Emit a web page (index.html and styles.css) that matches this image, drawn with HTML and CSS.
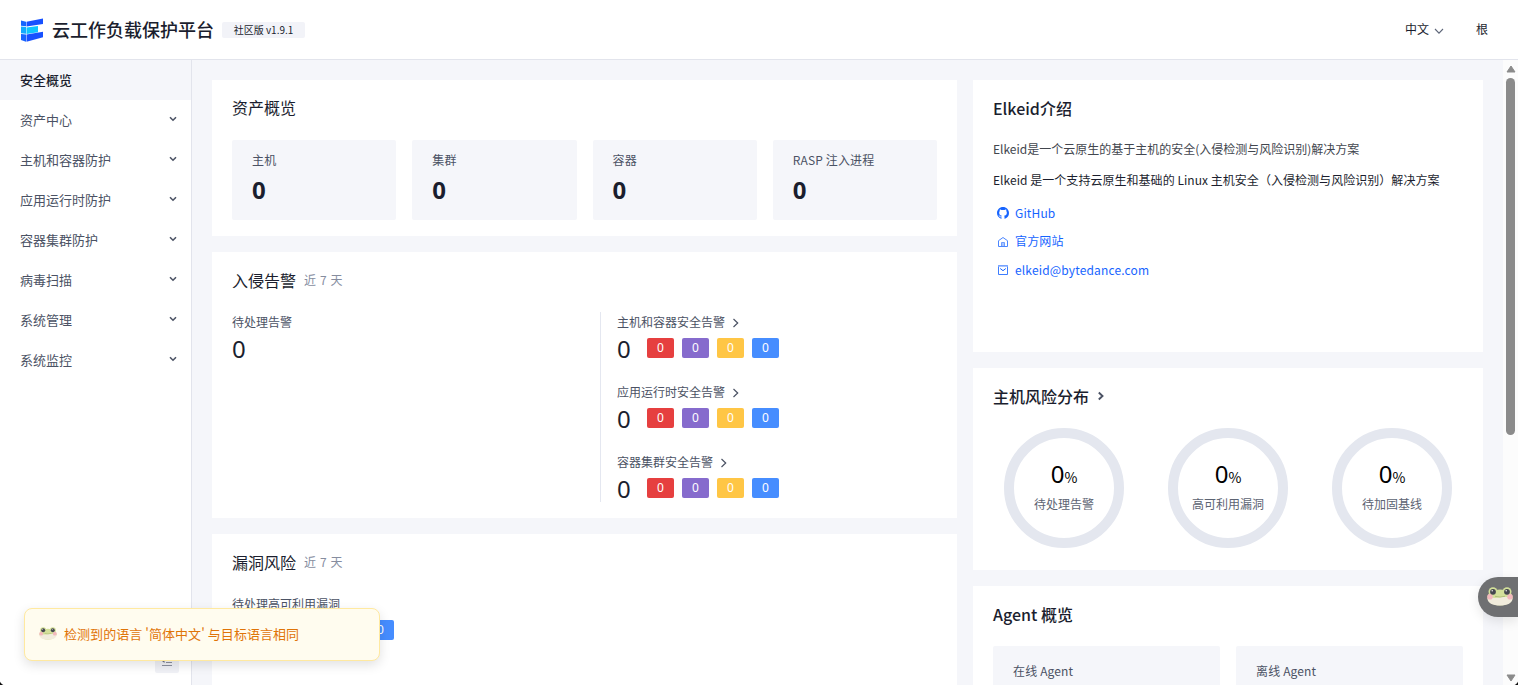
FILE: index.html
```html
<!DOCTYPE html>
<html lang="zh-CN">
<head>
  <meta charset="UTF-8">
  <meta name="viewport" content="width=device-width, initial-scale=1.0">
  <title>云工作负载保护平台</title>
  <link rel="stylesheet" href="styles.css">
</head>
<body>
  <svg class="defs" width="0" height="0">
    <symbol id="frog" viewBox="0 0 26 19">
      <circle cx="6" cy="4.800" r="4.500" fill="#d3e09a"/>
      <circle cx="20" cy="4.800" r="4.500" fill="#d3e09a"/>
      <ellipse cx="13" cy="10.500" rx="12.500" ry="8" fill="#d3e09a"/>
      <path d="M0.500 11 C5 10.500 8 11.500 13 10.500 S21 10.500 25.500 11 C26 16 20 18.600 13 18.600 S0 16 0.500 11Z" fill="#f1ecdc"/>
      <circle cx="3" cy="9.800" r="2.800" fill="#f3b8bd"/>
      <circle cx="23" cy="9.800" r="2.800" fill="#f3b8bd"/>
      <circle cx="6" cy="4.800" r="2.900" fill="#45474f"/>
      <circle cx="20" cy="4.800" r="2.900" fill="#45474f"/>
      <circle cx="5.200" cy="3.800" r="0.700" fill="#fff"/>
      <circle cx="19.200" cy="3.800" r="0.700" fill="#fff"/>
      <path d="M8 9.300 Q13 10.800 18 9.300" fill="none" stroke="#a3b36f" stroke-width="0.700"/>
    </symbol>
    <symbol id="down" viewBox="0 0 8 6"><path d="M1 1.200 L4 4.200 L7 1.200" fill="none" stroke="currentColor" stroke-width="1.600"/></symbol>
    <symbol id="right" viewBox="0 0 8 10"><path d="M1.500 1 L5.700 5 L1.500 9" fill="none" stroke="currentColor" stroke-width="1.200"/></symbol>
    <symbol id="right-bold" viewBox="0 0 8 10"><path d="M1.800 1.500 L5.500 5 L1.800 8.500" fill="none" stroke="currentColor" stroke-width="1.900"/></symbol>
  </svg>

  <header class="header">
    <svg class="logo" width="24" height="24" viewBox="0 0 24 24">
      <path d="M1 2.500 L6 3.700 V8.300 L1 7.700Z" fill="#1664ff"/>
      <path d="M6.500 3.700 L23 0.500 V6 L6.500 8.600Z" fill="#1751ff"/>
      <path d="M1 8.500 L6 9.100 V15.700 L1 15.300Z" fill="#12aaff"/>
      <path d="M6.500 9.400 L18 8 V14.300 L6.500 15.900Z" fill="#0fc5ff"/>
      <path d="M1 16.100 L6 16.600 V23.700 L1 22Z" fill="#1664ff"/>
      <path d="M6.500 16.600 L23 13.800 V19.300 L6.500 23.700Z" fill="#1751ff"/>
    </svg>
    <h1 class="brand">云工作负载保护平台</h1>
    <span class="version">社区版 v1.9.1</span>
    <div class="header-right">
      <span>中文</span>
      <svg class="lang-arrow" width="10" height="7" viewBox="0 0 10 7"><path d="M1 1 L5 5.200 L9 1" fill="none" stroke="#5d6578" stroke-width="1.100"/></svg>
      <span class="user">根</span>
    </div>
  </header>

  <div class="layout">
    <nav class="sidebar">
      <a class="nav-item active">安全概览</a>
      <a class="nav-item">资产中心<svg><use href="#down"/></svg></a>
      <a class="nav-item">主机和容器防护<svg><use href="#down"/></svg></a>
      <a class="nav-item">应用运行时防护<svg><use href="#down"/></svg></a>
      <a class="nav-item">容器集群防护<svg><use href="#down"/></svg></a>
      <a class="nav-item">病毒扫描<svg><use href="#down"/></svg></a>
      <a class="nav-item">系统管理<svg><use href="#down"/></svg></a>
      <a class="nav-item">系统监控<svg><use href="#down"/></svg></a>
      <div class="collapse">
        <svg width="12" height="12" viewBox="0 0 12 12"><path d="M1 1.500H11M5 4.500H11M5 7.500H11M1 10.500H11" stroke="#8c919f" stroke-width="1"/><path d="M3.500 4V8L1 6Z" fill="#6b7080"/></svg>
      </div>
    </nav>

    <main class="content">
      <div class="column-main">
        <section class="card assets">
          <h2 class="card-title thin">资产概览</h2>
          <div class="stats">
            <div class="stat"><span>主机</span><b>0</b></div>
            <div class="stat"><span>集群</span><b>0</b></div>
            <div class="stat"><span>容器</span><b>0</b></div>
            <div class="stat"><span>RASP 注入进程</span><b>0</b></div>
          </div>
        </section>

        <section class="card alarms">
          <h2 class="card-title thin">入侵告警<small>近 7 天</small></h2>
          <div class="alarm-body">
            <div class="alarm-total">
              <div class="label">待处理告警</div>
              <div class="number">0</div>
            </div>
            <div class="alarm-list">
              <div class="alarm">
                <div class="label">主机和容器安全告警<svg><use href="#right"/></svg></div>
                <div class="levels"><span class="number">0</span><i class="red">0</i><i class="purple">0</i><i class="yellow">0</i><i class="blue">0</i></div>
              </div>
              <div class="alarm">
                <div class="label">应用运行时安全告警<svg><use href="#right"/></svg></div>
                <div class="levels"><span class="number">0</span><i class="red">0</i><i class="purple">0</i><i class="yellow">0</i><i class="blue">0</i></div>
              </div>
              <div class="alarm">
                <div class="label">容器集群安全告警<svg><use href="#right"/></svg></div>
                <div class="levels"><span class="number">0</span><i class="red">0</i><i class="purple">0</i><i class="yellow">0</i><i class="blue">0</i></div>
              </div>
            </div>
          </div>
        </section>

        <section class="card vulns">
          <h2 class="card-title thin">漏洞风险<small>近 7 天</small></h2>
          <div class="alarm">
            <div class="label">待处理高可利用漏洞</div>
            <div class="levels"><span class="number">0</span><i class="red">0</i><i class="purple">0</i><i class="yellow">0</i><i class="blue">0</i></div>
          </div>
        </section>
      </div>

      <div class="column-side">
        <section class="card intro">
          <h2 class="card-title">Elkeid介绍</h2>
          <p class="desc">Elkeid是一个云原生的基于主机的安全(入侵检测与风险识别)解决方案</p>
          <p class="desc-full">Elkeid 是一个支持云原生和基础的 Linux 主机安全（入侵检测与风险识别）解决方案</p>
          <ul class="links">
            <li>
              <svg width="12" height="12" viewBox="0 0 16 16"><path fill="#1664ff" d="M8 0C3.580 0 0 3.580 0 8c0 3.540 2.290 6.530 5.470 7.590.4.070.55-.17.55-.38 0-.19-.01-.82-.01-1.490-2.010.37-2.530-.49-2.690-.94-.09-.23-.48-.94-.82-1.130-.28-.15-.68-.52-.01-.53.63-.01 1.080.58 1.230.82.72 1.210 1.870.87 2.330.66.070-.52.28-.87.51-1.070-1.780-.2-3.640-.89-3.640-3.950 0-.87.31-1.590.82-2.150-.08-.2-.36-1.020.08-2.120 0 0 .67-.21 2.200.82a7.600 7.600 0 0 1 4 0c1.530-1.040 2.200-.82 2.200-.82.44 1.100.16 1.920.08 2.120.51.56.82 1.270.82 2.150 0 3.070-1.870 3.750-3.650 3.950.29.25.54.73.54 1.480 0 1.070-.01 1.930-.01 2.200 0 .21.15.46.55.38A8 8 0 0 0 16 8c0-4.420-3.580-8-8-8Z"/></svg>
              <a>GitHub</a>
            </li>
            <li>
              <svg width="12" height="12" viewBox="0 0 12 12"><path d="M1.500 10.500V4.700L6 1.500L10.500 4.700V10.500Z" fill="none" stroke="#4b86ff"/><path d="M4.500 10V6.500H7.500V10" fill="#a9c5ff" stroke="#6f9fff"/></svg>
              <a>官方网站</a>
            </li>
            <li>
              <svg width="12" height="12" viewBox="0 0 12 12"><path d="M1.500 1.500H10.500V10.500H1.500Z" fill="none" stroke="#3d7dff"/><path d="M1 2H11" stroke="#8bb1ff" stroke-width="1.500"/><path d="M3.200 4.500L6 6.700L8.800 4.500" fill="none" stroke="#1664ff"/></svg>
              <a>elkeid@bytedance.com</a>
            </li>
          </ul>
        </section>

        <section class="card risks">
          <h2 class="card-title">主机风险分布<svg><use href="#right-bold"/></svg></h2>
          <div class="rings">
            <div class="ring"><div class="percent">0<span>%</span></div><div class="ring-label">待处理告警</div></div>
            <div class="ring"><div class="percent">0<span>%</span></div><div class="ring-label">高可利用漏洞</div></div>
            <div class="ring"><div class="percent">0<span>%</span></div><div class="ring-label">待加固基线</div></div>
          </div>
        </section>

        <section class="card agents">
          <h2 class="card-title">Agent 概览</h2>
          <div class="stats">
            <div class="stat">在线 Agent</div>
            <div class="stat">离线 Agent</div>
          </div>
        </section>
      </div>
    </main>

    <div class="scrollbar">
      <svg width="10" height="8" viewBox="0 0 10 8"><path d="M5 1L9 7H1Z" fill="#8b8b8b" stroke="#8b8b8b" stroke-linejoin="round"/></svg>
      <div class="thumb"></div>
      <svg class="arrow-down" width="10" height="8" viewBox="0 0 10 8"><path d="M5 7L9 1H1Z" fill="#8b8b8b" stroke="#8b8b8b" stroke-linejoin="round"/></svg>
    </div>
  </div>

  <div class="toast">
    <svg width="18" height="13"><use href="#frog"/></svg>
    <span>检测到的语言 '简体中文' 与目标语言相同</span>
  </div>
  <div class="frog-button"><svg width="28" height="19"><use href="#frog"/></svg></div>
  <div class="corner corner-left"></div>
  <div class="corner corner-right"></div>
</body>
</html>
```
FILE: styles.css
```css
* {
  box-sizing: border-box;
}
body {
  margin: 0;
  height: 685px;
  overflow: hidden;
  display: flex;
  flex-direction: column;
  font-family: "Noto Sans CJK SC", sans-serif;
  font-size: 12px;
  line-height: 20px;
  color: #1b1e2e;
  background: #fff;
}
h1, h2, p, ul {
  margin: 0;
  padding: 0;
}
svg {
  display: block;
  flex: none;
}
.defs {
  position: absolute;
}

/* header */
.header {
  height: 60px;
  flex: none;
  display: flex;
  align-items: center;
  padding: 0 30px 0 20px;
  border-bottom: 1px solid #e2e4ec;
}
.brand {
  margin-left: 8px;
  padding-bottom: 2px;
  font-size: 18px;
  font-weight: 500;
  line-height: 28px;
}
.version {
  margin-left: 8px;
  width: 83px;
  height: 16px;
  border-radius: 2px;
  background: #f2f3f8;
  font-size: 10px;
  line-height: 16px;
  text-align: center;
}
.header-right {
  margin-left: auto;
  padding-bottom: 2px;
  display: flex;
  align-items: center;
}
.lang-arrow {
  margin: 5px 0 0 5px;
}
.user {
  margin-left: 32px;
}

.layout {
  flex: 1;
  min-height: 0;
  display: flex;
}

/* sidebar */
.sidebar {
  width: 192px;
  flex: none;
  display: flex;
  flex-direction: column;
  border-right: 1px solid #e2e4ec;
}
.nav-item {
  height: 40px;
  flex: none;
  display: flex;
  align-items: center;
  justify-content: space-between;
  padding: 0 14px 1px 20px;
  font-size: 13px;
  color: #4b5264;
}
.nav-item.active {
  background: #f5f6fa;
  color: #1b1e2e;
  font-weight: 500;
}
.nav-item svg {
  width: 8px;
  height: 6px;
  margin-top: -1px;
}
.collapse {
  width: 24px;
  height: 24px;
  margin: auto 12px 12px auto;
  display: flex;
  align-items: center;
  justify-content: center;
  background: #f0f1f6;
  border-radius: 2px;
}

/* content */
.content {
  flex: 1;
  min-width: 0;
  display: flex;
  gap: 16px;
  padding: 20px 20px 0;
  background: #f5f6fa;
  overflow: hidden;
}
.column-main {
  width: 745px;
}
.column-side {
  width: 510px;
}
.column-main,
.column-side {
  flex: none;
  display: flex;
  flex-direction: column;
  gap: 16px;
}
.card {
  flex: none;
  padding: 15px 20px;
  background: #fff;
}
.card-title {
  display: flex;
  align-items: center;
  font-size: 16px;
  font-weight: 500;
  line-height: 26px;
}
.thin {
  font-weight: 400;
}
.card-title small {
  margin-left: 8px;
  font-size: 12px;
  font-weight: 400;
  color: #868d9f;
  letter-spacing: 0.6px;
}
.card-title svg {
  width: 8px;
  height: 10px;
  margin-left: 8px;
  color: #4b5264;
}
.assets {
  height: 156px;
  padding-top: 14px;
}
.assets .stats {
  margin-top: 20px;
}
.alarms {
  height: 266px;
}
.vulns {
  height: 266px;
}
.intro {
  height: 272px;
}
.risks {
  height: 202px;
}
.agents {
  height: 180px;
}
.stats {
  display: grid;
  grid-auto-flow: column;
  grid-auto-columns: 1fr;
  gap: 16px;
  margin-top: 19px;
}
.stat {
  height: 80px;
  padding: 10px 20px;
  border-radius: 2px;
  background: #f5f6fa;
  color: #4b5264;
  letter-spacing: 0.15px;
}
.agents .stat {
  padding-top: 15px;
}
.stat b {
  display: block;
  margin-top: 4px;
  font-family: "Noto Sans", sans-serif;
  font-size: 24px;
  line-height: 32px;
  color: #1b1e2e;
}
.label {
  display: flex;
  align-items: center;
  line-height: 20px;
  color: #4b5264;
}
.label svg {
  width: 8px;
  height: 10px;
  margin: 1px 0 0 7px;
}
.number {
  font-family: "Noto Sans", sans-serif;
  font-size: 24px;
  line-height: 34px;
  color: #1b1e2e;
}
.alarm-body {
  display: flex;
  margin-top: 19px;
}
.alarm-total {
  width: 368px;
}
.alarm-list {
  display: flex;
  flex-direction: column;
  gap: 16px;
  height: 190px;
  padding-left: 16px;
  border-left: 1px solid #e4e7f0;
}
.alarm {
  height: 54px;
}
.levels {
  display: flex;
  gap: 8px;
}
.levels .number {
  width: 13px;
  margin-right: 9px;
}
.levels i {
  width: 27px;
  height: 20px;
  margin-top: 6px;
  border-radius: 2px;
  font-family: "Noto Sans", sans-serif;
  font-size: 12px;
  font-style: normal;
  text-align: center;
  color: #fff;
}
.red {
  background: #e63f3f;
}
.purple {
  background: #866bcd;
}
.yellow {
  background: #ffc645;
}
.blue {
  background: #468dff;
}
.vulns .alarm {
  margin-top: 19px;
}

/* intro */
.intro .card-title {
  margin-bottom: 18px;
}
.intro p {
  margin-bottom: 11px;
  white-space: nowrap;
}
.intro .desc {
  color: #42464e;
}
.intro .desc-full {
  margin-bottom: 9px;
  letter-spacing: 0.04px;
}
.links {
  list-style: none;
}
.links li {
  display: flex;
  align-items: center;
  height: 28.5px;
  padding-left: 4px;
}
.links a {
  margin-left: 6px;
  padding-bottom: 1px;
  font-size: 12px;
  letter-spacing: 0.15px;
  color: #1664ff;
}

/* rings */
.rings {
  display: flex;
  justify-content: space-around;
  margin: 19px -11px 0;
}
.ring {
  width: 120px;
  height: 120px;
  border: 10px solid #e4e7ef;
  border-radius: 50%;
  padding-top: 20px;
  text-align: center;
  white-space: nowrap;
}
.percent {
  font-family: "Noto Sans", sans-serif;
  font-size: 24px;
  line-height: 32px;
  color: #000;
}
.percent span {
  font-family: "Noto Sans CJK SC", sans-serif;
  font-size: 14px;
}
.ring-label {
  margin-top: 1px;
  color: #5c6372;
}

/* scrollbar */
.scrollbar {
  width: 15px;
  flex: none;
  display: flex;
  flex-direction: column;
  align-items: center;
  padding: 5px 0 3px;
  background: #fcfcfc;
}
.thumb {
  width: 9px;
  height: 357px;
  margin-top: 5px;
  border-radius: 5px;
  background: #8b8b8b;
}
.arrow-down {
  margin-top: auto;
}

/* overlays */
.toast {
  position: absolute;
  left: 24px;
  top: 608px;
  width: 356px;
  height: 53px;
  display: flex;
  align-items: center;
  padding: 0 14px 2px;
  border: 1px solid #ffe9a0;
  border-radius: 8px;
  background: #fffcef;
  box-shadow: 0 4px 12px rgba(0, 0, 0, 0.12);
  color: #df7408;
  font-size: 13px;
  letter-spacing: 0.05px;
}
.toast span {
  margin-left: 7px;
}
.frog-button {
  position: absolute;
  right: 0;
  top: 577px;
  width: 40px;
  height: 40px;
  padding: 10px 0 0 8px;
  border-radius: 20px 0 0 20px;
  background: #6f7072;
  box-shadow: 0 4px 12px rgba(0, 0, 0, 0.1);
}
.corner {
  position: absolute;
  bottom: 0;
  width: 6px;
  height: 6px;
}
.corner-left {
  left: 0;
  background: radial-gradient(circle at 100% 0, transparent 6px, #111 7px);
}
.corner-right {
  right: 0;
  background: radial-gradient(circle at 0 0, transparent 6px, #111 7px);
}
```
